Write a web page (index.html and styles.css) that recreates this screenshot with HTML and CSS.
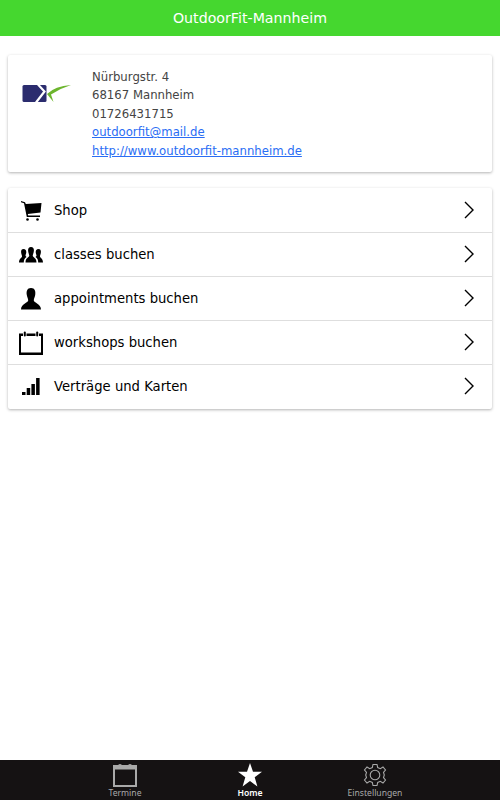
FILE: index.html
```html
<!DOCTYPE html>
<html lang="de">
<head>
  <meta charset="UTF-8" />
  <title>OutdoorFit-Mannheim</title>
  <link rel="stylesheet" href="styles.css">
</head>
<body>
  <header class="titelbar">OutdoorFit-Mannheim</header>

  <main>
    <section class="card studio">
      <svg class="logo" viewBox="0 0 50 20" width="50" height="20">
        <rect x="0.500" y="1" width="24" height="17" rx="1.500" fill="#2b2c6e"/>
        <path d="M16 0.500 L22.500 7.500 L14 18.500" fill="none" stroke="#fff" stroke-width="2.200"/>
        <path d="M25 10 Q33 2 49 1 Q39 4 29 10.500 L31.500 18 Z" fill="#6cb52d"/>
      </svg>
      <div class="adresse">
        <div>Nürburgstr. 4</div>
        <div>68167 Mannheim</div>
        <div>01726431715</div>
        <div><a href="#">outdoorfit@mail.de</a></div>
        <div><a href="#">http://www.outdoorfit-mannheim.de</a></div>
      </div>
    </section>

    <section class="card menu">
      <div class="zeile">
        <svg class="icon" viewBox="0 0 24 24"><path d="M2 2 L6 3.200 L6.800 5 L22.500 4 L21.500 13.500 L8.800 15 L9.200 16.500 L21 16.500 V18 H7.800 L5 4.200 L2 3.200 Z"/><circle cx="8.500" cy="20.500" r="1.300"/><circle cx="18.500" cy="20.500" r="1.300"/></svg>
        <span>Shop</span>
        <svg class="pfeil" viewBox="0 0 10 18"><path d="M1 1 L9 9 L1 17" /></svg>
      </div>
      <div class="zeile">
        <svg class="icon" viewBox="0 0 24 24"><path d="M12 4 C15 4 15.300 7 14.600 9.500 C14.100 11.500 13.600 12 13.800 13 C14.300 14.500 17.500 15 17.500 19.500 H6.500 C6.500 15 9.700 14.500 10.200 13 C10.400 12 9.900 11.500 9.400 9.500 C8.700 7 9 4 12 4 Z"/><path d="M4.500 6 C7 6 7.500 8 7.200 10 C6.900 11.500 6.300 12 6.600 13 L7.500 14 C5.500 15 4.800 17 4.800 19.500 H0 C0 15.500 2.800 15 3 13.500 C3.100 12.500 2.500 12 2.200 10 C1.800 8 2.300 6 4.500 6 Z"/><path d="M19.500 6 C21.700 6 22.200 8 21.800 10 C21.500 12 20.900 12.500 21 13.500 C21.200 15 24 15.500 24 19.500 H19.200 C19.200 17 18.500 15 16.500 14 L17.400 13 C17.700 12 17.100 11.500 16.800 10 C16.500 8 17 6 19.500 6 Z"/></svg>
        <span>classes buchen</span>
        <svg class="pfeil" viewBox="0 0 10 18"><path d="M1 1 L9 9 L1 17" /></svg>
      </div>
      <div class="zeile">
        <svg class="icon" viewBox="0 0 24 24"><path d="M12 1 C16 1 16.800 4.500 16.200 8 C15.700 10.500 14.800 11.500 14.800 13.500 C14.800 16 22 16.500 22 22.500 H2 C2 16.500 9.200 16 9.200 13.500 C9.200 11.500 8.300 10.500 7.800 8 C7.200 4.500 8 1 12 1 Z"/></svg>
        <span>appointments buchen</span>
        <svg class="pfeil" viewBox="0 0 10 18"><path d="M1 1 L9 9 L1 17" /></svg>
      </div>
      <div class="zeile">
        <svg class="icon" viewBox="0 0 24 24"><path fill-rule="evenodd" d="M0 2.500 H4 V5 H2 V21.500 H22 V5 H20 V2.500 H24 V24 H0 Z M7.500 2.500 H16.500 V5 H7.500 Z"/><rect x="4.800" y="0.500" width="2" height="5" rx="1"/><rect x="17.200" y="0.500" width="2" height="5" rx="1"/></svg>
        <span>workshops buchen</span>
        <svg class="pfeil" viewBox="0 0 10 18"><path d="M1 1 L9 9 L1 17" /></svg>
      </div>
      <div class="zeile">
        <svg class="icon" viewBox="0 0 24 24"><rect x="3" y="17" width="3.500" height="3"/><rect x="7.700" y="13" width="3.500" height="7"/><rect x="12.400" y="9" width="3.500" height="11"/><rect x="17.100" y="3" width="3.500" height="17"/></svg>
        <span>Verträge und Karten</span>
        <svg class="pfeil" viewBox="0 0 10 18"><path d="M1 1 L9 9 L1 17" /></svg>
      </div>
    </section>
  </main>

  <nav class="tabs">
    <div class="tab">
      <svg viewBox="0 0 24 24" width="24" height="24"><path fill="none" stroke="#a9a9a9" stroke-width="2" d="M1 3 H23 V23 H1 Z"/><rect x="1" y="3" width="22" height="3.500" fill="#a9a9a9"/><circle cx="7" cy="3" r="2" fill="#a9a9a9"/><circle cx="17" cy="3" r="2" fill="#a9a9a9"/></svg>
      <span>Termine</span>
    </div>
    <div class="tab aktiv">
      <svg viewBox="0 0 24 24" width="24" height="24"><path fill="#fff" d="M12 0 L15 8.800 H24 L16.700 14.200 L19.400 23.500 L12 18 L4.600 23.500 L7.300 14.200 L0 8.800 H9 Z"/></svg>
      <span>Home</span>
    </div>
    <div class="tab">
      <svg viewBox="0 0 24 24" width="24" height="24" fill="none" stroke="#a9a9a9" stroke-width="1.100"><circle cx="12" cy="12" r="4.800"/><path d="M10 1.500 H14 L14.700 4.600 L17.300 5.700 L20 4 L22.500 7 L20.500 9.400 L21.300 12 L20.500 14.600 L22.500 17 L20 20 L17.300 18.300 L14.700 19.400 L14 22.500 H10 L9.300 19.400 L6.700 18.300 L4 20 L1.500 17 L3.500 14.600 L2.700 12 L3.500 9.400 L1.500 7 L4 4 L6.700 5.700 L9.300 4.600 Z"/></svg>
      <span>Einstellungen</span>
    </div>
  </nav>
</body>
</html>
```

FILE: styles.css
```css
html, body {
  height: 100%;
}
body {
  margin: 0;
  background: #fff;
  font-family: "DejaVu Sans", sans-serif;
  display: flex;
  flex-direction: column;
  height: 800px;
  overflow: hidden;
}
.titelbar {
  height: 36px;
  line-height: 37px;
  background: #45d72f;
  color: #fff;
  text-align: center;
  font-size: 14.200px;
}
main {
  flex: 1;
  padding: 19px 8px 0;
}
.card {
  background: #fff;
  border-radius: 2px;
  box-shadow: 0 1px 3px rgba(0, 0, 0, 0.3);
}
.studio {
  display: flex;
  align-items: flex-start;
  padding: 13px 14px 12px 14px;
  margin-bottom: 16px;
}
.logo {
  flex: none;
  margin: 16px 20px 0 0;
}
.adresse {
  font-size: 11.700px;
  line-height: 18.400px;
  color: #444;
}
.adresse a {
  color: #2a6df4;
}
.menu {
  padding-top: 1px;
}
.zeile {
  display: flex;
  align-items: center;
  height: 44px;
  box-sizing: border-box;
  padding: 0 18px 0 11px;
  border-bottom: 1px solid #dedede;
  font-size: 13.200px;
  color: #000;
}
.zeile:last-child {
  border-bottom-color: transparent;
}
.icon {
  width: 24px;
  height: 24px;
  margin-right: 11px;
}
.zeile span {
  flex: 1;
}
.pfeil {
  width: 10px;
  height: 18px;
  margin-bottom: 2px;
  fill: none;
  stroke: #000;
  stroke-width: 1.400;
}
.tabs {
  height: 40px;
  background: #151213;
  display: flex;
  justify-content: center;
}
.tab {
  width: 125px;
  display: flex;
  flex-direction: column;
  align-items: center;
  padding-top: 3px;
  box-sizing: border-box;
  color: #a9a9a9;
  font-family: "Noto Sans", sans-serif;
  font-size: 8.600px;
}
.tab span {
  line-height: 13px;
}
.tab.aktiv {
  color: #fff;
  font-weight: 600;
}
```
